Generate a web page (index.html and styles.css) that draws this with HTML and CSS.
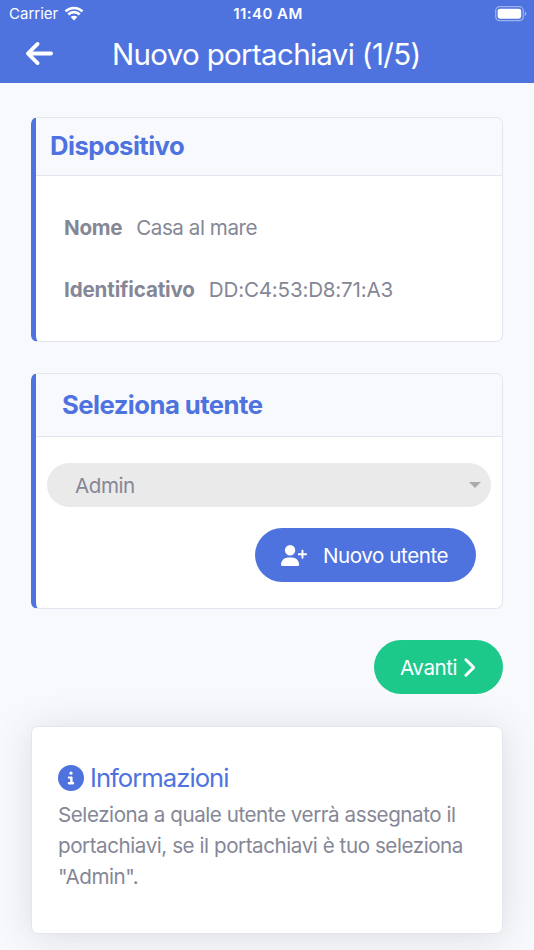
FILE: index.html
```html
<!DOCTYPE html>
<html lang="it">
<head>
  <meta charset="UTF-8" />
  <title>Nuovo portachiavi</title>
  <meta name="viewport" content="width=device-width, initial-scale=1.0"/>
  <link rel="stylesheet" href="styles.css">
</head>
<body>

  <header>
    <div class="status-bar">
      <div class="carrier">
        <span>Carrier</span>
        <svg class="wifi" viewBox="0 0 20 15">
          <path d="M1.5 5.4a12.2 12.2 0 0 1 17 0M4.3 8.5a8.1 8.1 0 0 1 11.4 0" fill="none" stroke="currentColor" stroke-width="2.6"/>
          <path d="M10 14.6l-3.4-3.5a4.9 4.9 0 0 1 6.8 0z" fill="currentColor"/>
        </svg>
      </div>
      <div class="clock">11:40 AM</div>
      <svg class="battery" viewBox="0 0 32 16">
        <rect x="0.7" y="0.7" width="27.6" height="14" rx="4" fill="none" stroke="currentColor" stroke-opacity="0.45" stroke-width="1.2"/>
        <rect x="2.6" y="2.7" width="23.6" height="10" rx="2.4" fill="currentColor"/>
        <path d="M29.8 5.3a2.7 2.7 0 0 1 0 4.8z" fill="currentColor" fill-opacity="0.5"/>
      </svg>
    </div>
    <div class="nav-bar">
      <a class="back" href="#" aria-label="Indietro">
        <svg viewBox="0 0 448 512"><path fill="currentColor" d="M9.4 233.4c-12.5 12.5-12.5 32.8 0 45.3l160 160c12.5 12.5 32.8 12.5 45.3 0s12.5-32.8 0-45.3L109.2 288 416 288c17.7 0 32-14.3 32-32s-14.3-32-32-32l-306.7 0L214.6 118.6c12.5-12.5 12.5-32.8 0-45.3s-32.8-12.5-45.3 0l-160 160z"/></svg>
      </a>
      <h1>Nuovo portachiavi (1/5)</h1>
    </div>
  </header>

  <main class="container">
    <section class="card card-left device">
      <div class="card-header"><h2>Dispositivo</h2></div>
      <div class="card-body">
        <div class="row"><b>Nome</b><span>Casa al mare</span></div>
        <div class="row row-id"><b>Identificativo</b><span>DD:C4:53:D8:71:A3</span></div>
      </div>
    </section>

    <section class="card card-left user">
      <div class="card-header"><h2>Seleziona utente</h2></div>
      <div class="card-body">
        <div class="select">
          <span>Admin</span>
          <i class="caret"></i>
        </div>
        <button class="btn btn-primary">
          <svg class="icon-user" viewBox="0 0 640 512"><path fill="currentColor" d="M96 128a128 128 0 1 1 256 0A128 128 0 1 1 96 128zM0 482.3C0 383.8 79.8 304 178.3 304h91.4C368.2 304 448 383.8 448 482.3c0 16.4-13.3 29.7-29.7 29.7H29.7C13.3 512 0 498.7 0 482.3zM504 312V248H440c-13.3 0-24-10.7-24-24s10.7-24 24-24h64V136c0-13.3 10.7-24 24-24s24 10.7 24 24v64h64c13.3 0 24 10.7 24 24s-10.7 24-24 24H552v64c0 13.3-10.7 24-24 24s-24-10.7-24-24z"/></svg>
          <span>Nuovo utente</span>
        </button>
      </div>
    </section>

    <button class="btn btn-success">
      <span>Avanti</span>
      <svg class="icon-next" viewBox="0 0 320 512"><path fill="currentColor" stroke="currentColor" stroke-width="12" d="M310.6 233.4c12.5 12.5 12.5 32.8 0 45.3l-192 192c-12.5 12.5-32.8 12.5-45.3 0s-12.5-32.8 0-45.3L242.7 256 73.4 86.6c-12.5-12.5-12.5-32.8 0-45.3s32.8-12.5 45.3 0l192 192z"/></svg>
    </button>

    <section class="card info">
      <h3>
        <svg viewBox="0 0 512 512"><path fill="currentColor" d="M256 512A256 256 0 1 0 256 0a256 256 0 1 0 0 512zM216 336h24V272H216c-13.3 0-24-10.7-24-24s10.7-24 24-24h48c13.3 0 24 10.7 24 24v88h8c13.3 0 24 10.7 24 24s-10.7 24-24 24H216c-13.3 0-24-10.7-24-24s10.7-24 24-24zm40-208a32 32 0 1 1 0 64 32 32 0 1 1 0-64z"/></svg>
        <span>Informazioni</span>
      </h3>
      <p>Seleziona a quale utente verrà assegnato il portachiavi, se il portachiavi è tuo seleziona "Admin".</p>
    </section>
  </main>

</body>
</html>
```

FILE: styles.css
```css
:root {
  --blue: #4e73df;
  --green: #1cc88a;
  --text: #858796;
  --bg: #f8f9fc;
  --border: #e3e6f0;
}

* {
  box-sizing: border-box;
}

body {
  margin: 0;
  height: 950px;
  overflow: hidden;
  font-family: Inter, 'Liberation Sans', sans-serif;
  font-size: 20.6px;
  line-height: 31px;
  letter-spacing: -0.44px;
  color: var(--text);
  background-color: var(--bg);
}

h1, h2, h3, p {
  margin: 0;
}

svg {
  display: block;
}

header {
  height: 83px;
  background: var(--blue);
  color: white;
}

.status-bar {
  display: grid;
  grid-template-columns: 1fr auto 1fr;
  align-items: center;
  height: 27px;
  padding: 0 7px 0 9px;
  font-size: 15px;
  line-height: 27px;
  letter-spacing: 0;
}

.carrier {
  display: flex;
  align-items: center;
  gap: 6px;
}

.wifi {
  width: 20px;
  height: 15px;
}

.clock {
  font-weight: 600;
  letter-spacing: 0.45px;
}

.battery {
  width: 32px;
  height: 16px;
  justify-self: end;
}

.nav-bar {
  display: flex;
  align-items: center;
  height: 54px;
}

.back {
  width: 87px;
  padding-left: 26px;
  margin: 0 25px 2px 0;
  color: white;
}

.back svg {
  width: 27px;
  height: 31px;
}

h1 {
  font-size: 29.5px;
  font-weight: 400;
  line-height: 40px;
  letter-spacing: -0.68px;
}

.container {
  display: flex;
  flex-direction: column;
  padding: 34px 31px 0;
}

.card {
  background: white;
  border: 1px solid var(--border);
  border-radius: 7px;
}

.card-left {
  border-left: 5px solid var(--blue);
}

.card-header {
  display: flex;
  align-items: center;
  background: var(--bg);
  border-bottom: 1px solid var(--border);
  border-radius: 0 6px 0 0;
}

h2 {
  padding-bottom: 2px;
  font-size: 25.7px;
  font-weight: 700;
  letter-spacing: -0.55px;
  color: var(--blue);
}

.device {
  height: 225px;
}

.device .card-header {
  height: 58px;
  padding-left: 14px;
}

.device .card-body {
  display: flex;
  flex-direction: column;
  gap: 31px;
  padding: 36px 28px;
}

.row {
  display: flex;
  gap: 14px;
}

.row b {
  font-weight: 700;
  letter-spacing: -0.3px;
}

.row-id {
  letter-spacing: -0.2px;
}

.row-id b {
  letter-spacing: -0.15px;
}

.user {
  height: 236px;
  margin-top: 31px;
}

.user .card-header {
  height: 63px;
  padding-left: 26px;
}

.user .card-body {
  display: flex;
  flex-direction: column;
  padding: 26px 11px 0;
}

.select {
  display: flex;
  align-items: center;
  justify-content: space-between;
  height: 44px;
  padding: 0 10px 0 28px;
  background: #eaeaea;
  border-radius: 22px;
}

.caret {
  border: 6.5px solid transparent;
  border-top-color: #aaa;
  border-bottom: 0;
}

.btn {
  display: flex;
  align-items: center;
  align-self: flex-end;
  height: 54px;
  padding: 0 26px;
  border: none;
  border-radius: 27px;
  font: inherit;
  letter-spacing: inherit;
  color: white;
  cursor: pointer;
}

.btn-primary {
  width: 221px;
  margin: 21px 15px 0 0;
  gap: 16px;
  background: var(--blue);
}

.btn-success {
  width: 129px;
  margin-top: 31px;
  gap: 5px;
  background: var(--green);
}

.icon-user {
  width: 26px;
  height: 21px;
}

.icon-next {
  width: 13px;
  height: 21px;
}

.btn svg {
  flex: none;
}

.btn span {
  white-space: nowrap;
}

.info {
  height: 208px;
  margin-top: 32px;
  padding: 35px 26px;
  box-shadow: 0 3px 36px rgba(58, 59, 69, 0.15);
}

h3 {
  display: flex;
  align-items: center;
  gap: 6px;
  margin-bottom: 6px;
  font-size: 25.7px;
  font-weight: 400;
  letter-spacing: -1px;
  color: var(--blue);
}

h3 svg {
  width: 26px;
  height: 26px;
}
```
